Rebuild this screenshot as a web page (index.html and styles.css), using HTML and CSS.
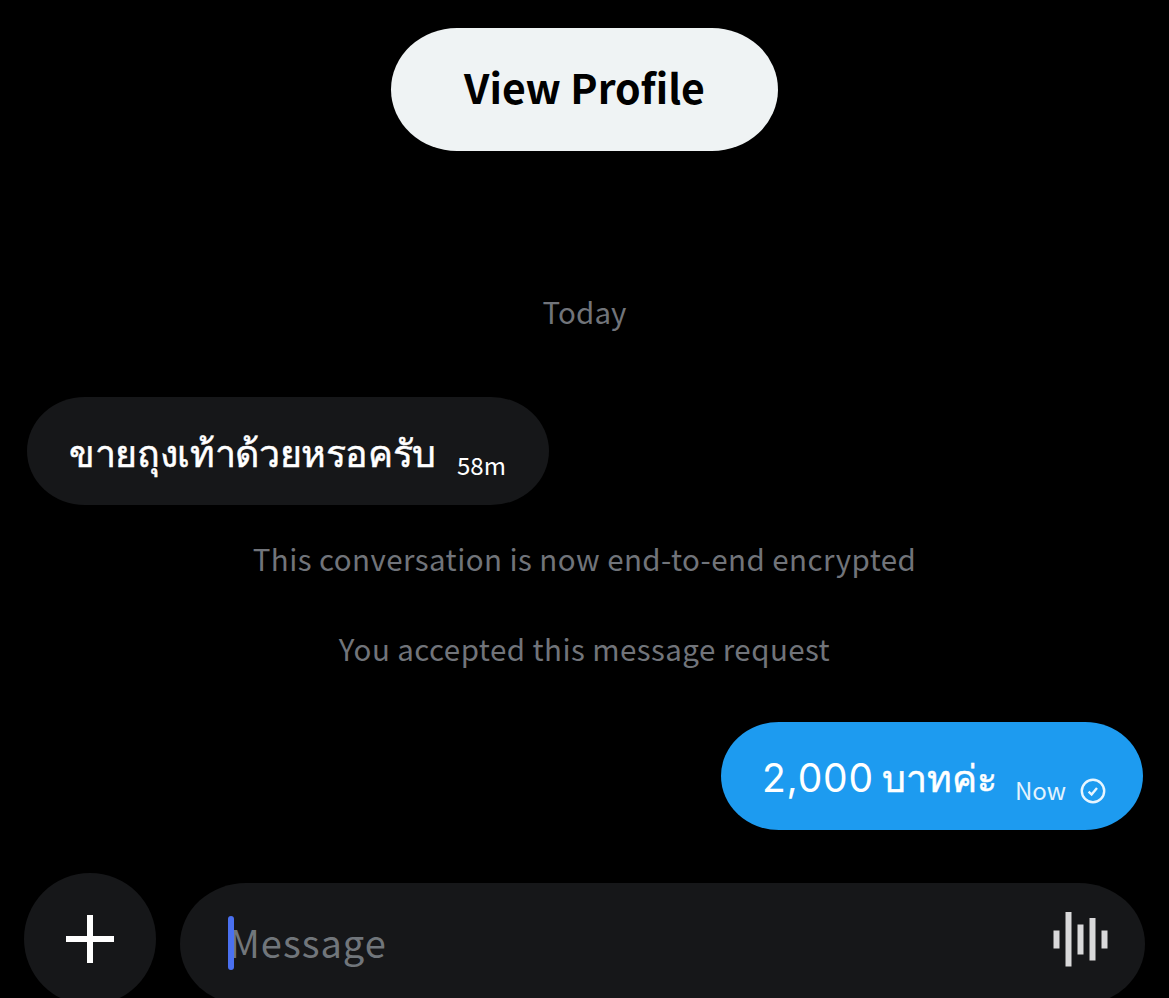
FILE: index.html
```
<!DOCTYPE html>
<html lang="th">
<head>
<meta charset="utf-8">
<title>Messages</title>
<link rel="stylesheet" href="styles.css">
</head>
<body>
<main class="chat">
  <button class="profile-button"><span class="profile-label">View Profile</span></button>
  <p class="notice notice-day"><span>Today</span></p>
  <div class="bubble bubble-in">
    <span class="bubble-text text-in">ขายถุงเท้าด้วยหรอครับ</span>
    <span class="bubble-time time-in">58m</span>
  </div>
  <p class="notice notice-encrypted"><span>This conversation is now end-to-end encrypted</span></p>
  <p class="notice notice-accepted"><span>You accepted this message request</span></p>
  <div class="bubble bubble-out">
    <span class="bubble-text text-out"><span class="amount">2,000</span> <span class="baht">บาทค่ะ</span></span>
    <span class="bubble-time time-out">Now</span>
    <svg class="sent-icon" viewBox="0 0 26 26" aria-hidden="true">
      <circle cx="13" cy="13" r="11.2"/>
      <path d="M8.6 13.6l3 2.9 5.4-6.6"/>
    </svg>
  </div>
  <div class="composer">
    <button class="add-button" aria-label="Add">
      <svg class="add-icon" viewBox="0 0 48 48"><path d="M24 0v48M0 24h48"/></svg>
    </button>
    <div class="input">
      <span class="caret"></span>
      <span class="placeholder">Message</span>
      <svg class="voice-icon" viewBox="0 0 55 55" aria-hidden="true">
        <path d="M3.5 18.5v18M15.5 0v54.5M27.5 12.5v30M39.5 6v42.5M51.5 18.5v18"/>
      </svg>
    </div>
  </div>
</main>
</body>
</html>
```
FILE: styles.css
```
* { box-sizing: border-box; }
body {
  margin: 0;
  background: #000;
  font-family: "Noto Sans CJK SC", "Noto Sans", sans-serif;
  overflow: hidden;
}
button { border: 0; padding: 0; font-family: inherit; }
.chat {
  width: 1169px;
  height: 998px;
  display: flex;
  flex-direction: column;
  overflow: hidden;
}
.profile-button {
  flex: none;
  align-self: center;
  width: 387px;
  height: 123px;
  margin-top: 28px;
  padding-bottom: 6px;
  border-radius: 66px / 61.5px;
  background: #eff3f4;
  color: #000;
  font-size: 41px;
  font-weight: 700;
  line-height: 117px;
}
.notice {
  flex: none;
  margin: 0;
  height: 44px;
  line-height: 40px;
  text-align: center;
  white-space: nowrap;
  font-size: 29.5px;
  letter-spacing: 0.44px;
  color: #71747a;
}
.notice-day { margin-top: 141px; letter-spacing: 0.1px; line-height: 39px; }
.bubble {
  flex: none;
  height: 108px;
  display: flex;
  border-radius: 58px / 54px;
  color: #fff;
  white-space: nowrap;
}
.bubble-in {
  width: 522px;
  margin: 61px 0 0 27px;
  padding-left: 42px;
  background: #161719;
}
.bubble-text { font-size: 37.5px; line-height: 108px; }
.text-in { width: 388px; letter-spacing: -0.35px; -webkit-text-stroke: 0.5px #fff; }
.bubble-time { font-size: 24px; line-height: 108px; padding-top: 14px; }
.notice-encrypted { margin-top: 33px; }
.notice-accepted { margin-top: 46px; }
.bubble-out {
  align-self: flex-end;
  width: 422px;
  margin: 50px 26px 0 0;
  padding-left: 42px;
  background: #1d9bf0;
}
.text-out { width: 252px; }
.amount { font-family: Inter, sans-serif; font-size: 39px; letter-spacing: 0.8px; margin-left: -1px; }
.baht { -webkit-text-stroke: 0.5px #fff; }
.time-out { width: 65px; color: #e4f3fd; }
.sent-icon {
  width: 26px;
  height: 26px;
  margin-top: 56px;
  fill: none;
  stroke: #e8f6ff;
  stroke-width: 2.4;
}
.composer {
  display: flex;
  flex: none;
  margin-top: 43px;
  padding-left: 24px;
  gap: 24px;
}
.add-button {
  width: 132px;
  height: 132px;
  border-radius: 50%;
  background: #161719;
  display: grid;
  place-items: center;
}
.add-icon { width: 48px; height: 48px; stroke: #fff; stroke-width: 6; }
.input {
  display: flex;
  width: 965px;
  height: 122px;
  margin-top: 10px;
  padding: 0 37px 0 48px;
  border-radius: 66px / 61px;
  background: #161719;
}
.caret {
  z-index: 1;
  width: 6px;
  height: 54px;
  margin: 33px -5px 0 0;
  border-radius: 3px;
  background: #4a70f0;
}
.placeholder { flex: 1; font-size: 38px; letter-spacing: 1px; line-height: 117px; color: #71767b; }
.voice-icon { width: 55px; height: 55px; margin-top: 29px; stroke: #d9d9da; stroke-width: 6; }
```
